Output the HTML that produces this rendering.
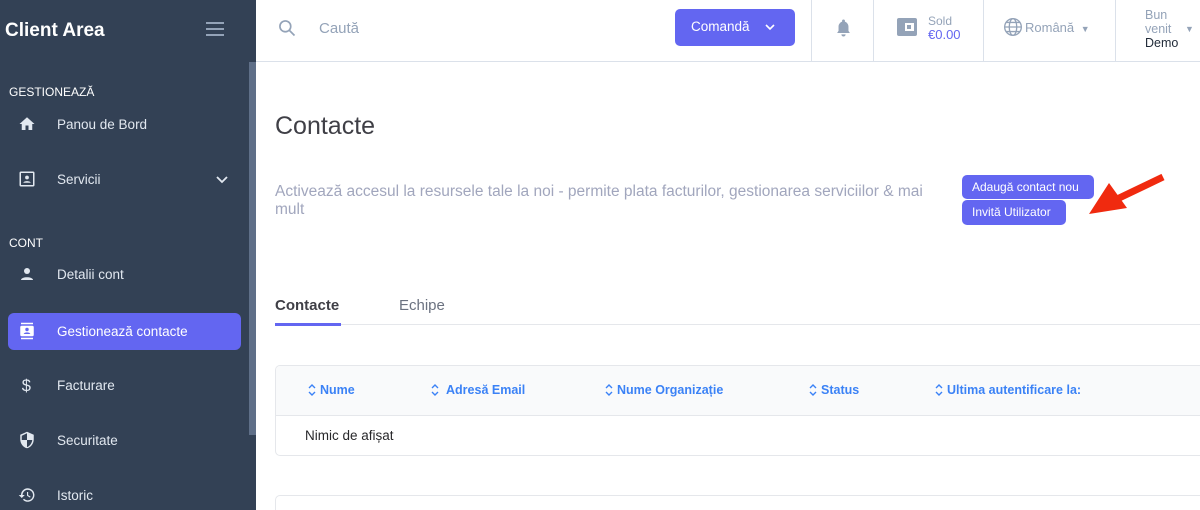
<!DOCTYPE html>
<html><head><meta charset="utf-8"><style>
*{box-sizing:border-box;margin:0;padding:0}
html,body{width:1200px;height:510px;overflow:hidden}
body{font-family:"Liberation Sans",sans-serif;background:#fff;position:relative}
.sb{position:absolute;left:0;top:0;width:256px;height:510px;background:#334155}
.scroll{position:absolute;left:249px;top:62px;width:7px;height:373px;background:#5f6f88}
.logo{position:absolute;left:5px;top:20px;color:#fff;font-weight:bold;font-size:19px}
.ham{position:absolute;left:206px;top:22px;width:18px}
.ham i{display:block;height:2px;background:#94a3b8;margin-bottom:4px}
.sec{position:absolute;left:9px;color:#fff;font-size:12px}
.it{position:absolute;left:8px;width:233px;height:37px;border-radius:6px;color:#e2e8f0;font-size:13.5px;line-height:37px;padding-left:49px}
.it svg{position:absolute;left:10px;top:9px}
.act{background:#6366f1;color:#fff}
.top{position:absolute;left:256px;top:0;width:944px;height:62px;border-bottom:1px solid #dbe1ea}
.vl{position:absolute;top:0;width:1px;height:62px;background:#dbe1ea}
.btn{position:absolute;background:#6366f1;color:#fff;border-radius:5px}
.th{position:absolute;top:383px;color:#3b82f6;font-weight:bold;font-size:12.5px}
.th svg{vertical-align:-2px;margin-right:4px}
</style></head><body>
<div class="sb">
<div class="logo">Client Area</div>
<div class="ham"><i></i><i></i><i></i></div>
<div class="sec" style="top:85px">GESTIONEAZĂ</div>
<div class="it" style="top:106px"><svg width="18" height="18" viewBox="0 0 24 24"><path d="M10 20v-6h4v6h5v-8h3L12 3 2 12h3v8z" fill="#e2e8f0"/></svg>Panou de Bord</div>
<div class="it" style="top:161px"><svg width="18" height="18" viewBox="0 0 24 24"><rect x="3" y="3" width="18" height="18" rx="1" fill="none" stroke="#e2e8f0" stroke-width="2"/><circle cx="12" cy="10" r="2.5" fill="#e2e8f0"/><path d="M7 17c1-3 9-3 10 0z" fill="#e2e8f0"/></svg>Servicii<svg style="left:208px;top:15px" width="12" height="8" viewBox="0 0 12 8"><path d="M1 1l5 5 5-5" fill="none" stroke="#e2e8f0" stroke-width="1.8"/></svg></div>
<div class="sec" style="top:236px">CONT</div>
<div class="it" style="top:256px"><svg width="18" height="18" viewBox="0 0 24 24"><circle cx="12" cy="8" r="4" fill="#e2e8f0"/><path d="M4 20c0-5 16-5 16 0z" fill="#e2e8f0"/></svg>Detalii cont</div>
<div class="it act" style="top:313px"><svg width="18" height="18" viewBox="0 0 24 24"><rect x="4" y="1" width="16" height="2" fill="#fff"/><rect x="4" y="21" width="16" height="2" fill="#fff"/><rect x="3" y="5" width="18" height="14" rx="2" fill="#fff"/><circle cx="12" cy="10" r="2.3" fill="#6366f1"/><path d="M7.5 16c1-3 8-3 9 0z" fill="#6366f1"/></svg>Gestionează contacte</div>
<div class="it" style="top:367px"><svg width="18" height="18" viewBox="0 0 24 24"><text x="5" y="20" font-size="22" fill="#e2e8f0" font-family="Liberation Sans">$</text></svg>Facturare</div>
<div class="it" style="top:422px"><svg width="18" height="18" viewBox="0 0 24 24"><path d="M12 1L3 5v6c0 6 4 11 9 12 5-1 9-6 9-12V5z" fill="#e2e8f0"/><path d="M12 3v9h7c-.5 4.5-3.5 8.5-7 9.5V12H5V6.3z" fill="#334155"/></svg>Securitate</div>
<div class="it" style="top:477px"><svg width="18" height="18" viewBox="0 0 24 24"><path d="M13 3a9 9 0 0 0-9 9H1l4 4 4-4H6a7 7 0 1 1 2 5l-1.4 1.4A9 9 0 1 0 13 3zm-1 5v5l4 2.5.8-1.3-3.3-2V8z" fill="#e2e8f0"/></svg>Istoric</div>
<div class="scroll"></div>
</div>
<div class="top">
<svg style="position:absolute;left:21px;top:18px" width="20" height="20" viewBox="0 0 24 24"><circle cx="10" cy="10" r="6.5" fill="none" stroke="#94a3b8" stroke-width="2"/><path d="M15 15l6 6" stroke="#94a3b8" stroke-width="2"/></svg>
<div style="position:absolute;left:63px;top:20px;color:#94a3b8;font-size:15px">Caută</div>
<div class="btn" style="left:419px;top:9px;width:120px;height:37px;font-size:13.5px;line-height:36px;padding-left:16px">Comandă<svg style="position:absolute;left:90px;top:15px" width="10" height="7" viewBox="0 0 10 7"><path d="M1 1l4 4 4-4" fill="none" stroke="#fff" stroke-width="1.6"/></svg></div>
<div class="vl" style="left:555px"></div>
<svg style="position:absolute;left:579px;top:18px" width="17" height="20" viewBox="0 0 24 28"><path d="M12 2a2 2 0 0 1 2 2v1c3 1 5 4 5 7v6l2 3H3l2-3v-6c0-3 2-6 5-7V4a2 2 0 0 1 2-2zM9 23h6a3 3 0 0 1-6 0z" fill="#94a3b8"/></svg>
<div class="vl" style="left:617px"></div>
<svg style="position:absolute;left:641px;top:18px" width="20" height="18" viewBox="0 0 20 18"><rect x="0" y="0" width="20" height="18" rx="2" fill="#94a3b8"/><rect x="8" y="5" width="9" height="8" fill="#fff"/><rect x="10" y="7" width="4" height="4" fill="#94a3b8"/></svg>
<div style="position:absolute;left:672px;top:14px;color:#94a3b8;font-size:12px;line-height:14px">Sold<br><span style="color:#6366f1;font-size:13px">€0.00</span></div>
<div class="vl" style="left:727px"></div>
<svg style="position:absolute;left:747px;top:17px" width="20" height="20" viewBox="0 0 24 24" fill="none" stroke="#94a3b8" stroke-width="1.6"><circle cx="12" cy="12" r="10"/><ellipse cx="12" cy="12" rx="4.5" ry="10"/><path d="M2 12h20M4 6.5h16M4 17.5h16"/></svg>
<div style="position:absolute;left:769px;top:20px;color:#94a3b8;font-size:13px">Română <span style="font-size:9px;margin-left:3px">&#9660;</span></div>
<div class="vl" style="left:859px"></div>
<div style="position:absolute;left:889px;top:8px;color:#94a3b8;font-size:12.5px;line-height:14px">Bun<br>venit<br><span style="color:#1f2937">Demo</span></div>
<div style="position:absolute;left:929px;top:24px;color:#94a3b8;font-size:9px">&#9660;</div>
</div>
<div style="position:absolute;left:275px;top:112px;font-size:25px;color:#3f3f46">Contacte</div>
<div style="position:absolute;left:275px;top:183px;width:672px;font-size:15.5px;line-height:18px;color:#a1a6bd">Activează accesul la resursele tale la noi - permite plata facturilor, gestionarea serviciilor &amp; mai mult</div>
<div class="btn" style="left:962px;top:175px;width:132px;height:24px;font-size:12px;line-height:24px;padding-left:10px">Adaugă contact nou</div>
<div class="btn" style="left:962px;top:200px;width:104px;height:25px;font-size:12px;line-height:25px;padding-left:10px">Invită Utilizator</div>
<svg style="position:absolute;left:1085px;top:172px" width="80" height="45" viewBox="0 0 80 45"><path d="M78 5L30 28" stroke="#f02a0f" stroke-width="7"/><path d="M4 42l20-31 18 25z" fill="#f02a0f"/></svg>
<div style="position:absolute;left:275px;top:297px;font-size:15px;color:#3f3f46;font-weight:bold">Contacte</div>
<div style="position:absolute;left:399px;top:297px;font-size:15px;color:#6b7280">Echipe</div>
<div style="position:absolute;left:275px;top:324px;width:925px;height:1px;background:#e5e7eb"></div>
<div style="position:absolute;left:275px;top:323px;width:66px;height:3px;background:#6366f1"></div>
<div style="position:absolute;left:275px;top:365px;width:940px;height:91px;border:1px solid #e5e7eb;border-radius:5px;overflow:hidden">
<div style="height:50px;background:#f9fafb;border-bottom:1px solid #e5e7eb"></div>
</div>
<div class="th" style="left:308px"><svg width="8" height="12" viewBox="0 0 8 12"><path d="M1 4l3-3 3 3M1 8l3 3 3-3" fill="none" stroke="#3b82f6" stroke-width="1.4"/></svg>Nume</div>
<div class="th" style="left:431px"><svg width="8" height="12" viewBox="0 0 8 12"><path d="M1 4l3-3 3 3M1 8l3 3 3-3" fill="none" stroke="#3b82f6" stroke-width="1.4"/></svg> Adresă Email</div>
<div class="th" style="left:605px"><svg width="8" height="12" viewBox="0 0 8 12"><path d="M1 4l3-3 3 3M1 8l3 3 3-3" fill="none" stroke="#3b82f6" stroke-width="1.4"/></svg>Nume Organizație</div>
<div class="th" style="left:809px"><svg width="8" height="12" viewBox="0 0 8 12"><path d="M1 4l3-3 3 3M1 8l3 3 3-3" fill="none" stroke="#3b82f6" stroke-width="1.4"/></svg>Status</div>
<div class="th" style="left:935px"><svg width="8" height="12" viewBox="0 0 8 12"><path d="M1 4l3-3 3 3M1 8l3 3 3-3" fill="none" stroke="#3b82f6" stroke-width="1.4"/></svg>Ultima autentificare la:</div>
<div style="position:absolute;left:305px;top:428px;font-size:13.5px;color:#27272a">Nimic de afișat</div>
<div style="position:absolute;left:275px;top:495px;width:940px;height:40px;border:1px solid #e5e7eb;border-radius:5px"></div>
</body></html>
